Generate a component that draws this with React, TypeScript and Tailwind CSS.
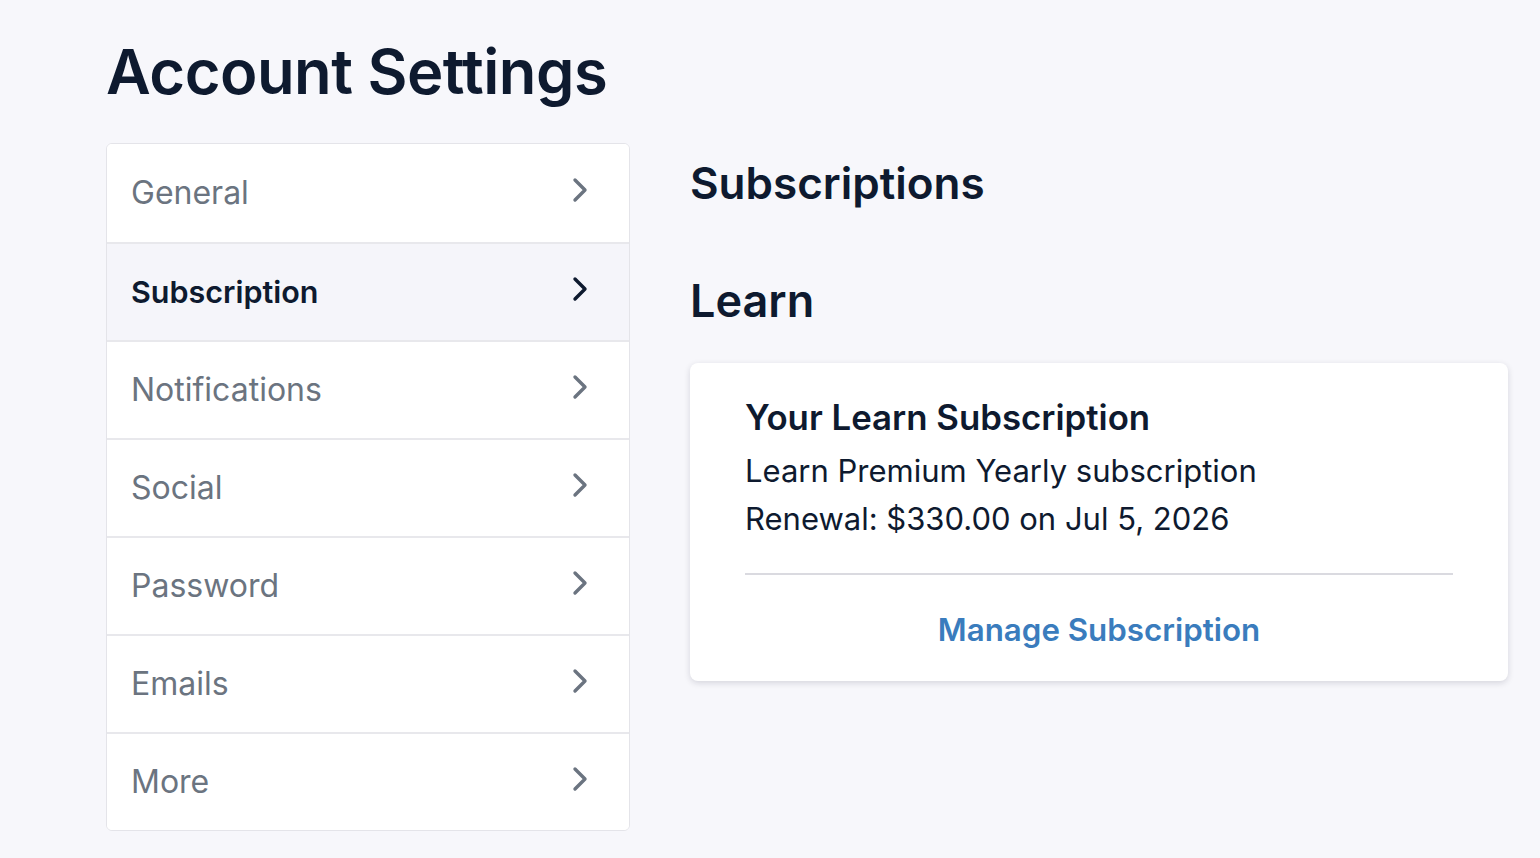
import React from 'react';

const ITEMS = ["General", "Subscription", "Notifications", "Social", "Password", "Emails", "More"];

function Chevron({ active }: { active: boolean }) {
  return (
    <svg width="18" height="28" viewBox="0 0 18 28" fill="none" className={`-mt-[6px] ${active ? 'text-[#0e1a2f]' : 'text-[#6b7480]'}`}>
      <path d="M4 4 L14 14 L4 24" stroke="currentColor" strokeWidth="3.4" strokeLinecap="round" strokeLinejoin="round" />
    </svg>
  );
}

export default function App() {
  const active = "Subscription";
  return (
    <div className="min-h-screen bg-[#f7f7fb] pl-[106px] pt-[36px] text-[#0e1a2f]" style={{ fontFamily: 'Inter, "Noto Sans", sans-serif' }}>
      <h1 className="text-[61.5px] font-semibold leading-[72px] tracking-[-0.5px]">Account Settings</h1>

      <div className="mt-[35px] flex gap-[60px]">
        {/* Sidebar */}
        <div className="w-[524px] rounded-[6px] border border-[#e4e4e9] bg-white overflow-hidden">
          {ITEMS.map((item, i) => (
            <div
              key={item}
              className={`flex h-[98px] items-center justify-between pl-[24px] pr-[40px] ${i > 0 ? 'border-t-2 border-[#e8e8ec]' : ''} ${
                item === active ? 'bg-[#f5f5fa]' : 'bg-white'
              }`}
            >
              <span className={item === active ? 'text-[30.5px] font-semibold text-[#0e1a2f]' : 'text-[32px] text-[#6b7480]'}>{item}</span>
              <Chevron active={item === active} />
            </div>
          ))}
        </div>

        {/* Content */}
        <div className="w-[818px]">
          <h2 className="mt-[12px] text-[44px] font-semibold leading-[56px]">Subscriptions</h2>
          <h3 className="mt-[62px] text-[45px] font-semibold leading-[56px]">Learn</h3>
          <div className="mt-[34px] rounded-[8px] bg-white px-[55px] pt-[32px] pb-[24px] shadow-[0_2px_6px_rgba(20,20,50,0.15)]">
            <div className="text-[34.8px] font-semibold leading-[44px]">Your Learn Subscription</div>
            <div className="mt-[8px] text-[31px] leading-[48px]">Learn Premium Yearly subscription</div>
            <div className="text-[31px] leading-[48px]">Renewal: $330.00 on Jul 5, 2026</div>
            <div className="mt-[30px] h-[2px] bg-[#dadae0]" />
            <div className="mt-[28px] text-center text-[31.3px] font-semibold leading-[54px] text-[#3a7cbd]">Manage Subscription</div>
          </div>
        </div>
      </div>
    </div>
  );
}
